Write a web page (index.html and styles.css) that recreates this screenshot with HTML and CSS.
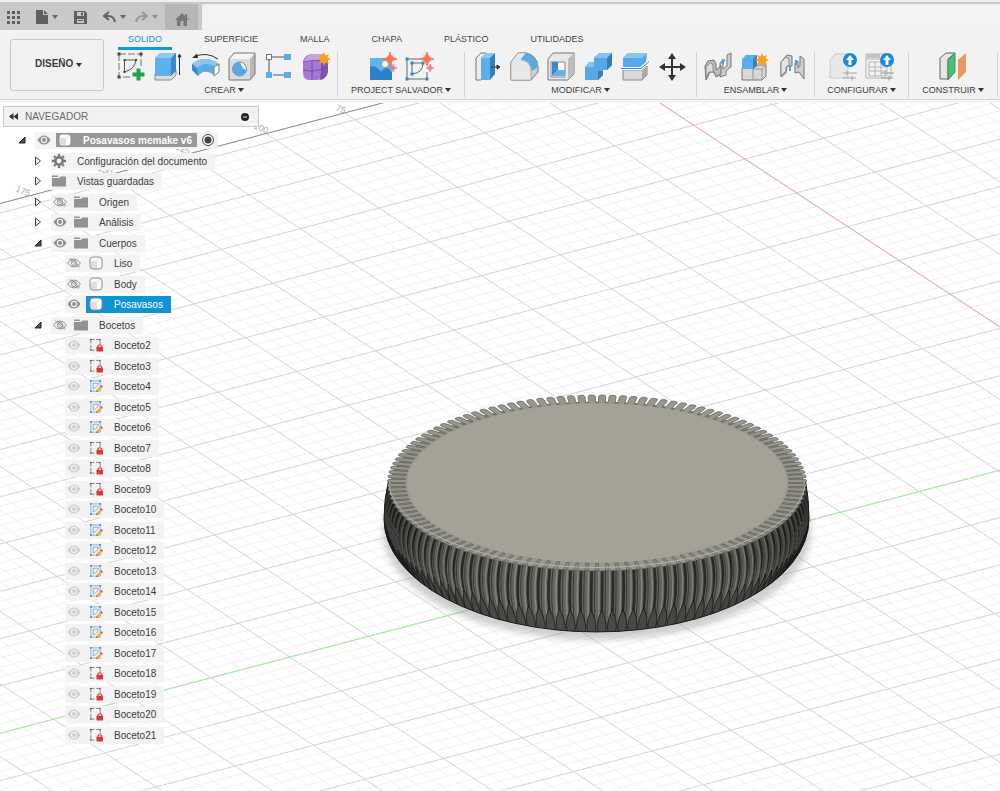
FILE: index.html
```html
<!DOCTYPE html>
<html lang="es">
<head>
  <meta charset="UTF-8">
  <meta name="viewport" content="width=device-width, initial-scale=1.0">
  <title>Posavasos memake v6</title>
  <link rel="stylesheet" href="styles.css">
</head>
<body>
  <!-- Shared icons for the browser tree -->
  <svg class="symbols" aria-hidden="true">
    <symbol id="eye" viewBox="0 0 14 10"><path d="M0.5 5Q3.5 0.5 7 0.5T13.5 5Q10.5 9.5 7 9.5T0.5 5Z" fill="currentColor"/><circle cx="7" cy="5" r="3.2" fill="#f2f2f2"/><circle cx="7" cy="5" r="2" fill="currentColor"/></symbol>
    <symbol id="eye-off" viewBox="0 0 14 10"><path d="M0.5 5Q3.5 1 7 1T13.5 5Q10.5 9 7 9T0.5 5Z" fill="none" stroke="currentColor"/><circle cx="7" cy="5" r="2.5" fill="none" stroke="currentColor"/><path d="M2 0.5L12 9.5M4 0.5L13 8.5" stroke="currentColor" stroke-width="0.8"/></symbol>
    <symbol id="folder" viewBox="0 0 14 12"><path d="M0 0.5H5.5L6.5 2H0Z M0 3H7L8.5 1.5H14V11.5H0Z" fill="#929292"/></symbol>
    <symbol id="body" viewBox="0 0 14 14"><rect x="1" y="1" width="12" height="12" rx="3" fill="#fafafa" stroke="#8d8d8d"/><path d="M3 5H8V12H4Q2 12 2 10V6Z" fill="#dedede"/><path d="M8 5L11 2" stroke="#ddd"/></symbol>
    <symbol id="sketch-lock" viewBox="0 0 15 15"><path d="M2 1.5H12V7M2 2V13H7" fill="none" stroke="#666" stroke-width="0.8" stroke-dasharray="4 1.5"/><path d="M1 1h1.500v1.500h-1.500zM11 1h1.500v1.500h-1.500zM1 12h1.500v1.500h-1.500z" fill="#444"/><rect x="8" y="9.5" width="7" height="5" rx="0.5" fill="#d9373c"/><path d="M9.5 10V8.5Q11.5 6 13.5 8.5V10" fill="none" stroke="#d9373c" stroke-width="1.2"/></symbol>
    <symbol id="sketch" viewBox="0 0 15 15"><path d="M2 2H12V13H2Z" fill="none" stroke="#8a9aa5" stroke-width="0.8"/><path d="M4.5 4.5H10Q9.5 9 4.5 10.5Z" fill="none" stroke="#4d9edb" stroke-width="0.8"/><path d="M1 1h2v2h-2zM11 1h2v2h-2zM1 12h2v2h-2z" fill="#3f96d8"/><path d="M8 13.5L8.5 11L12 7.5L14 9.5L10.5 13Z" fill="#f4b040"/><path d="M12 7.5L13 6.5L15 8.5L14 9.5Z" fill="#d9373c"/><path d="M7.5 14L8.5 12L9.5 13Z" fill="#444"/></symbol>
    <symbol id="gear" viewBox="0 0 12 12"><circle cx="6" cy="6" r="3.2" fill="none" stroke="#777" stroke-width="2.2"/><path d="M6 0V2M6 10V12M0 6H2M10 6H12M1.8 1.8L3 3M9 9L10.2 10.2M1.8 10.2L3 9M9 3L10.2 1.8" stroke="#777" stroke-width="2"/></symbol>
    <symbol id="closed" viewBox="0 0 8 10"><path d="M1.5 1V9L6.5 5Z" fill="#fff" stroke="#444"/></symbol>
    <symbol id="open" viewBox="0 0 8 10"><path d="M7 2V8H1Z" fill="#555" stroke="#222"/></symbol>
    <symbol id="spark" viewBox="0 0 14 14"><path d="M7 0Q7.8 6.2 14 7Q7.8 7.8 7 14Q6.2 7.8 0 7Q6.2 6.2 7 0Z"/></symbol>
    <symbol id="star" viewBox="0 0 14 14"><path d="M7 0L8.5 3.6L12 2L10.4 5.5L14 7L10.4 8.5L12 12L8.5 10.4L7 14L5.5 10.4L2 12L3.6 8.5L0 7L3.6 5.5L2 2L5.5 3.6Z" fill="#f7a11a"/></symbol>
  </svg>

  <header>
    <div class="quickbar">
      <button aria-label="Panel de datos"><svg width="13" height="13"><path d="M0 0h3v3h-3zM5 0h3v3h-3zM10 0h3v3h-3zM0 5h3v3h-3zM5 5h3v3h-3zM10 5h3v3h-3zM0 10h3v3h-3zM5 10h3v3h-3zM10 10h3v3h-3z" fill="#606060"/></svg></button>
      <button class="with-arrow" aria-label="Archivo"><svg width="12" height="14"><path d="M0 0H7V5H12V14H0Z M8 0L12 4H8Z" fill="#606060"/></svg><span class="arrow"></span></button>
      <button aria-label="Guardar"><svg width="13" height="13"><path d="M0 0H11L13 2V13H0Z" fill="#606060"/><path d="M3 1H10V5H3ZM3 8H10V12H3Z" fill="#c9c9c9"/><path d="M7 1.5h2v3h-2zM4 9h5v1h-5z" fill="#606060"/></svg></button>
      <button class="with-arrow" aria-label="Deshacer"><svg width="13" height="12"><path d="M6 1L1 5L6 9M1 5H5Q11 5 12 11" fill="none" stroke="#606060" stroke-width="2"/></svg><span class="arrow"></span></button>
      <button class="with-arrow faded" aria-label="Rehacer"><svg width="13" height="12"><path d="M7 1L12 5L7 9M12 5H8Q2 5 1 11" fill="none" stroke="#777" stroke-width="2"/></svg><span class="arrow"></span></button>
      <button class="home" aria-label="Inicio"><svg width="14" height="13"><path d="M7 0L14 7H12V13H8.5V8H5.5V13H2V7H0Z M10 1h2v4h-2z" fill="#777"/></svg></button>
      <div class="doc-tab"></div>
    </div>

    <div class="toolbar">
      <label class="workspace">
        <select aria-label="Espacio de trabajo"><option>DISEÑO</option></select>
        <span class="arrow"></span>
      </label>
      <div class="ribbon">
        <nav class="tabs">
          <a href="#" class="active">SOLIDO</a>
          <a href="#">SUPERFICIE</a>
          <a href="#">MALLA</a>
          <a href="#">CHAPA</a>
          <a href="#">PLÁSTICO</a>
          <a href="#">UTILIDADES</a>
        </nav>
        <div class="groups">
          <div class="group">
            <div class="tools">
              <button aria-label="Crear boceto"><svg viewBox="0 0 30 30"><path d="M2 2H24V14M2 2V25H15" fill="none" stroke="#777" stroke-dasharray="7 2"/><path d="M7.5 8H19Q18 17 7.5 20Z" fill="none" stroke="#555"/><path d="M0.5 0.5h3v3h-3zM22.5 0.5h3v3h-3zM0.5 23.5h3v3h-3zM6.5 7h2v2h-2zM18 7h2v2h-2zM6.5 19h2v2h-2z" fill="#444"/><path d="M19.5 16.5h4v4h4v4h-4v4h-4v-4h-4v-4h4z" fill="#1fa548"/></svg></button>
              <button aria-label="Extrusión"><svg viewBox="0 0 30 30"><path d="M1 22L6 18H22V23L17 28H1Z" fill="#ddd" stroke="#888"/><path d="M1 6L6 1H22L17 6V24H1Z" fill="#5fb0ea"/><path d="M1 6L6 1H22L17 6Z" fill="#8bc8f2"/><path d="M17 6L22 1V19L17 24Z" fill="#3d87c4"/><path d="M25.5 23V3M24 5L25.5 2L27 5Z" fill="#333" stroke="#333"/></svg></button>
              <button aria-label="Revolución"><svg viewBox="0 0 30 30"><path d="M3 5Q15 -1 27 7" fill="none" stroke="#333"/><path d="M1 6L6 1.5L7 6Z" fill="#333"/><path d="M1 12Q14 2 28 12L23 23Q14 16 7 24L1 18Z" fill="#5cace4"/><path d="M1 12Q14 2 28 12L24 15Q14 8 6 16Z" fill="#8ac8f1"/><path d="M1 12L6 16L7 24L1 18Z" fill="#408ac4"/><path d="M23 15L28 12V20L23 24Z" fill="#fff" stroke="#777"/></svg></button>
              <button aria-label="Agujero"><svg viewBox="0 0 30 30"><path d="M1 7L6 1H27V22L22 28H1Z" fill="#dcdcdc"/><path d="M1 7L6 1H27L22 7Z" fill="#f5f5f5"/><path d="M22 7L27 1V22L22 28Z" fill="#b9b9b9"/><path d="M1 7L6 1H27V22L22 28H1Z" fill="none" stroke="#777"/><circle cx="11.5" cy="17" r="7" fill="#fff" stroke="#888"/><path d="M12 10Q14 17 19 18Q17 24 11.5 24A7 7 0 0 1 12 10Z" fill="#55a9e4"/></svg></button>
              <button aria-label="Patrón"><svg viewBox="0 0 30 30"><path d="M6 5H21M4 8V20M8 23H21" stroke="#555"/><rect x="1.5" y="2.5" width="5" height="5" fill="#fff" stroke="#777"/><path d="M19 2h7v6h-7zM1 20h6v6h-6zM19 20h7v6h-7z" fill="#5badea"/></svg></button>
              <button aria-label="Crear forma"><svg viewBox="0 0 30 30"><path d="M1 9Q3 2 11 2H20Q26 5 26 12V20Q24 28 15 28H7Q1 28 1 20Z" fill="#a679d4"/><path d="M2 10Q4 3 11 2H20Q24 4 20 8Z" fill="#c4a2e8"/><path d="M20 8Q26 5 26 12V20Q24 27 18 28Z" fill="#8254b2"/><path d="M10 9V28M1 18Q12 21 26 15M2 10Q12 7 20 9V27" fill="none" stroke="#6e3fa5" stroke-width="0.8"/><use href="#star" x="15" y="0" width="14" height="14"/></svg></button>
            </div>
            <button class="menu">CREAR<span class="arrow"></span></button>
          </div>
          <div class="group">
            <div class="tools">
              <button aria-label="Generar imagen"><svg viewBox="0 0 30 30"><path d="M2 6H24V28H2Z" fill="#62b2eb"/><path d="M2 15Q8 12 13 20Q19 12 24 21V28H2Z" fill="#2a81c5"/><circle cx="17" cy="12" r="3" fill="#fff4bd"/><use href="#spark" x="15" y="0" width="14" height="14" fill="#ff7651" stroke="#ff7651"/><use href="#spark" x="21" y="12" width="8" height="8" fill="#f27591" stroke="#f27591"/></svg></button>
              <button aria-label="Generar boceto"><svg viewBox="0 0 30 30"><path d="M2 7H16M2 7V27H22V20M7 11H18Q18 21 7 22Z" fill="none" stroke="#666"/><path d="M0.5 5.5h3v3h-3zM0.5 25.5h3v3h-3zM20.5 25.5h3v3h-3zM5.5 9.5h3v3h-3zM16.5 9.5h3v3h-3zM5.5 20.5h3v3h-3z" fill="#258bd1"/><use href="#spark" x="15" y="0" width="14" height="14" fill="#ff7651" stroke="#ff7651"/><use href="#spark" x="21" y="12" width="8" height="8" fill="#f27591" stroke="#f27591"/></svg></button>
            </div>
            <button class="menu">PROJECT SALVADOR<span class="arrow"></span></button>
          </div>
          <div class="group">
            <div class="tools">
              <button aria-label="Pulsar/tirar"><svg viewBox="0 0 30 30"><path d="M3 6L8 1H13V23L8 28H3Z" fill="#eee" stroke="#777"/><path d="M8 6L13 1H22L17 6V28H8Z" fill="#5cade8"/><path d="M8 6L13 1H22L17 6Z" fill="#8bc8f2"/><path d="M17 6L22 1V22L17 28Z" fill="#347fbc"/><path d="M18 15H25M24 13L27 15L24 17Z" fill="#333" stroke="#333"/></svg></button>
              <button aria-label="Empalme"><svg viewBox="0 0 30 30"><path d="M1 10L8 1H16Q27 3 28 15V20L21 28H1Z" fill="#cfcfcf" stroke="#777"/><path d="M1 10L8 1H16L11 8Q21 9 21 20V28H1Z" fill="#e8e8e8" stroke="#888" stroke-width="0.5"/><path d="M11 7L16 1Q27 3 28 15L22 19Q20 8 11 7Z" fill="#58aae5"/></svg></button>
              <button aria-label="Vaciado"><svg viewBox="0 0 30 30"><path d="M1 7L6 1H27V22L21 28H1Z" fill="#e8e8e8" stroke="#777"/><path d="M21 7L27 1V22L21 28Z" fill="#bdbdbd"/><path d="M4 10H18V25H4Z" fill="#f9f9f9" stroke="#888"/><path d="M5 10H11V18L5 24Z" fill="#3889ca"/><path d="M5 24L11 18H18V24Z" fill="#64b2e9"/></svg></button>
              <button aria-label="Combinar"><svg viewBox="0 0 30 30"><path d="M1 15L5 10H10V6L15 1H28V13L23 18H19V23L14 28H1Z" fill="#56a8e4"/><path d="M1 15L5 10H10L10 15ZM10 6L15 1H28L23 6Z" fill="#84c4f0"/><path d="M23 6L28 1V13L23 18ZM14 19H19V23L14 28Z" fill="#347fb9"/></svg></button>
              <button aria-label="Dividir cuerpo"><svg viewBox="0 0 30 30"><path d="M2 6L7 1H26L25 11L21 15H2Z" fill="#55a9e5"/><path d="M2 6L7 1H26L21 6Z" fill="#87c7f1"/><path d="M2 18H21L26 14V23L21 28H2Z" fill="#d8d8d8" stroke="#888"/><path d="M21 19L26 14V23L21 28Z" fill="#aaa"/><path d="M0 16.5H20L28 9.5" fill="none" stroke="#fff" stroke-width="3"/><path d="M0 16.5H20L28 9.5" fill="none" stroke="#238ad3"/></svg></button>
              <button aria-label="Mover"><svg viewBox="0 0 30 30"><path d="M14 4V26M4 15H25" stroke="#333" stroke-width="2"/><path d="M14 1L18 7H10ZM14 29L10 23H18ZM1 15L7 11V19ZM28 15L22 19V11Z" fill="#333"/></svg></button>
            </div>
            <button class="menu">MODIFICAR<span class="arrow"></span></button>
          </div>
          <div class="group">
            <div class="tools">
              <button aria-label="Junta"><svg viewBox="0 0 30 30"><path d="M16 11L19 10V17L23 14V3L27 1V15L22 19V23L16 25Z" fill="#ccc" stroke="#777"/><path d="M1 14L4 9L10 8L12 12V18L17 14V22L12 25L10 20H6L2 28Z" fill="#bbb" stroke="#707070"/><path d="M4 13Q7 9 9 13V20H5L2 26V15Z" fill="#ddd" stroke="#888"/><path d="M19 7V12M17 10L21 8" stroke="#4da3df" stroke-width="2"/></svg></button>
              <button aria-label="Nuevo componente"><svg viewBox="0 0 30 30"><path d="M1 16H13L17 13H25L25 24L21 28H1Z" fill="#d7d7d7" stroke="#777"/><path d="M12 17V28M12 17H21L25 13M21 17V28" fill="none" stroke="#999"/><path d="M1 7L5 3H16V13L12 17H1Z" fill="#5badea"/><path d="M12 7L16 3V13L12 17Z" fill="#3581bb"/><use href="#star" x="14" y="1" width="14" height="14"/></svg></button>
              <button aria-label="Unión como construida"><svg viewBox="0 0 30 30"><path d="M3 10L9 3L14 4V14H9L8 21L3 25Z" fill="#ccc" stroke="#777"/><path d="M3 10L8 5L11 7V13L8 15V19L3 24Z" fill="#e5e5e5" stroke="#888"/><path d="M17 11L20 9V16L22 13V4L26 7V27L21 20L17 21Z" fill="#cfcfcf" stroke="#777"/><path d="M12 14V19M18 8V13" stroke="#459fdf" stroke-width="2"/></svg></button>
            </div>
            <button class="menu">ENSAMBLAR<span class="arrow"></span></button>
          </div>
          <div class="group">
            <div class="tools">
              <button aria-label="Configurar modelo"><svg viewBox="0 0 30 30"><path d="M2 8L7 2H20V26H2Z" fill="#e8e8e8" stroke="#ccc"/><path d="M15 21H29M19 18.5V23.5M15 26H28M24 23.5V28.5" stroke="#a4a4a4"/><circle cx="22" cy="8" r="7" fill="#168adb"/><path d="M22 3L26 8H23.5V13H20.5V8H18Z" fill="#fff"/></svg></button>
              <button aria-label="Tabla de configuraciones"><svg viewBox="0 0 30 30"><path d="M1 2H26V26H1ZM1 7H26M4 10H22V24H4ZM4 15H22M4 19H22M10 10V24M16 10V24" fill="#f4f4f4" stroke="#b4b4b4"/><path d="M1 2H15V6H1Z" fill="#c4c4c4"/><path d="M16 21H29M20 18.5V23.5M16 26H28M24 23.5V28.5" stroke="#999"/><circle cx="22" cy="8" r="7" fill="#168adb"/><path d="M22 3L26 8H23.5V13H20.5V8H18Z" fill="#fff"/></svg></button>
            </div>
            <button class="menu">CONFIGURAR<span class="arrow"></span></button>
          </div>
          <div class="group">
            <div class="tools">
              <button aria-label="Plano de desfase"><svg viewBox="0 0 30 30"><path d="M2 6L8 1H17L10 7V27H2Z" fill="#e6e6e6" stroke="#666"/><path d="M10 8L17 1V20L10 28Z" fill="#45c373" stroke="#4f8a65"/><path d="M20 8L28 1V20L20 28Z" fill="#e9975e"/></svg></button>
            </div>
            <button class="menu">CONSTRUIR<span class="arrow"></span></button>
          </div>
        </div>
      </div>
    </div>
  </header>

  <main>
    <svg id="scene" viewBox="0 102 1000 689" preserveAspectRatio="xMinYMin slice" role="img" aria-label="Modelo 3D del posavasos"></svg>

    <aside>
      <div class="browser-head">
        <button aria-label="Contraer"><svg width="9" height="7"><path d="M4.5 0V7L0 3.5ZM9 0V7L4.5 3.5Z" fill="#333"/></svg></button>
        <h2>NAVEGADOR</h2>
        <button aria-label="Minimizar"><svg width="8" height="8"><circle cx="4" cy="4" r="4" fill="#222"/><path d="M2 4H6" stroke="#ddd"/></svg></button>
      </div>
      <ul id="tree"></ul>
    </aside>
  </main>

  <script src="script.js"></script>
</body>
</html>
```

FILE: styles.css
```css
* {
  box-sizing: border-box;
}
body {
  margin: 0;
  min-height: 100vh;
  display: flex;
  flex-direction: column;
  font-family: "Liberation Sans", Arial, sans-serif;
  font-size: 9px;
  color: #3c3c3c;
  background-color: #fff;
}
button, select {
  font: inherit;
  color: inherit;
  background: none;
  border: none;
  padding: 0;
  margin: 0;
}
svg {
  display: block;
}
.symbols {
  position: absolute;
  width: 0;
  height: 0;
}
.arrow {
  display: inline-block;
  border: 3px solid transparent;
  border-top: 4px solid #333;
  border-bottom: none;
}
header {
  background-color: #f2f2f2;
  border-bottom: 3px solid #f4f4f4;
}

/* Top bar with file actions */
.quickbar {
  display: flex;
  align-items: center;
  height: 30px;
  padding: 2px 0 0 7px;
  gap: 16px;
  background-color: #c9c9c9;
  border-top: 2px solid #eee;
}
.quickbar .with-arrow {
  display: flex;
  align-items: center;
  gap: 4px;
}
.quickbar .with-arrow + .with-arrow {
  margin-left: -7px;
}
.quickbar .arrow {
  border-top-color: #666;
}
.faded {
  opacity: 0.6;
}
.home {
  align-self: stretch;
  display: flex;
  align-items: center;
  justify-content: center;
  width: 33px;
  margin-left: -9px;
  padding-top: 4px;
  background-color: #b6b6b6;
}
.doc-tab {
  flex: 1;
  align-self: stretch;
  margin-left: -12px;
  background-color: #f3f3f3;
  border-radius: 3px 0 0 0;
}

/* Ribbon */
.toolbar {
  display: flex;
  height: 70px;
  border-bottom: 1px solid #d4d4d4;
}
.workspace {
  position: relative;
  width: 94px;
  height: 52px;
  margin: 9px 7px 0 10px;
}
.workspace select {
  appearance: none;
  width: 100%;
  height: 100%;
  padding: 0 0 3px 24px;
  font-size: 10px;
  font-weight: bold;
  border: 1px solid #c8c8c8;
  border-radius: 3px;
}
.workspace .arrow {
  position: absolute;
  right: 22px;
  top: 24px;
}
.ribbon {
  flex: 1;
}
.tabs {
  display: flex;
  gap: 22px;
  height: 20px;
  padding-left: 7px;
}
.tabs a {
  padding: 4px 10px 0;
  line-height: 11px;
  color: #444;
  text-decoration: none;
  border-bottom: 3px solid transparent;
}
.tabs .active {
  color: #1795d4;
  border-bottom-color: #1795d4;
}
.groups {
  display: grid;
  grid-template-columns: 227px 127px 232px 118px 94px 89px;
  padding-top: 2px;
}
.group {
  display: flex;
  flex-direction: column;
  align-items: center;
  height: 45px;
  border-right: 1px solid #d2d2d2;
}
.tools {
  display: flex;
  gap: 7px;
}
.tools svg {
  width: 30px;
  height: 30px;
}
.menu {
  display: flex;
  align-items: center;
  gap: 2px;
  height: 17px;
}

/* Viewport */
main {
  position: relative;
  flex: 1;
}
#scene {
  position: absolute;
  width: 100%;
  height: 100%;
}
aside {
  position: relative;
  width: 256px;
  margin: 3px 0 0 3px;
}
.browser-head {
  display: flex;
  align-items: center;
  gap: 7px;
  height: 21px;
  padding: 0 9px 0 5px;
  background-color: #f1f1f1;
  border: 1px solid #cbcbcb;
}
.browser-head h2 {
  flex: 1;
  margin: 0;
  font-size: 10px;
  font-weight: normal;
  color: #6a6a6a;
}
#tree {
  list-style: none;
  margin: 3px 0 0;
  padding: 0;
  font-size: 10px;
}
#tree li {
  display: flex;
  align-items: center;
  height: 20px;
}
#tree li:nth-child(odd) {
  margin-bottom: 1px;
}
.toggle {
  width: 8px;
  margin: 0 9px 0 15px;
}
.toggle svg {
  width: 8px;
  height: 10px;
}
.level-1 .toggle {
  margin-left: 31px;
}
.level-2 .toggle {
  margin: 0 0 0 54px;
}
.chip {
  display: flex;
  align-items: center;
  gap: 7px;
  height: 17px;
  padding-right: 8px;
  background-color: rgba(242, 242, 242, 0.95);
}
.chip .icon {
  width: 14px;
  height: 14px;
}
.chip .name {
  display: flex;
  align-items: center;
  height: 17px;
  gap: 11px;
}
.eye {
  padding-left: 2px;
  color: #8e8e8e;
}
.eye svg {
  width: 14px;
  height: 10px;
}
.eye.dim {
  color: #cfcfcf;
}
.no-eye .name {
  padding-left: 1px;
}
.level-0 .chip {
  gap: 5px;
  padding-right: 4px;
}
.level-0 .name {
  height: 14px;
  padding: 0 5px 0 2px;
  color: #fff;
  font-weight: bold;
  background-color: #989898;
}
.level-0 input {
  width: 12px;
  height: 12px;
  margin: 0;
  accent-color: #444;
}
.level-2 .chip {
  gap: 5px;
}
.level-2 .name {
  padding-left: 3px;
}
.selected .chip {
  padding-right: 0;
}
.selected .name {
  padding-right: 8px;
  color: #fff;
  background-color: #0e94d6;
}

/* Scene drawing */
.minor {
  stroke: #f2f2f2;
}
.major {
  stroke: #d4d4d4;
}
.edge {
  stroke: #888;
}
.axis-x {
  stroke: #f5a3a3;
}
.axis-y {
  stroke: #98f298;
}
.ruler {
  fill: #aaa;
  font-size: 9px;
}
```

FILE: script.js
```js
// Browser tree: level, icon, text, eye state, toggle
const rows = [
  [0, 'body', 'Posavasos memake v6', 'eye', 'open'],
  [1, 'gear', 'Configuración del documento', '', 'closed'],
  [1, 'folder', 'Vistas guardadas', '', 'closed'],
  [1, 'folder', 'Origen', 'eye-off', 'closed'],
  [1, 'folder', 'Análisis', 'eye', 'closed'],
  [1, 'folder', 'Cuerpos', 'eye', 'open'],
  [2, 'body', 'Liso', 'eye-off', ''],
  [2, 'body', 'Body', 'eye-off', ''],
  [2, 'body', 'Posavasos', 'eye', ''],
  [1, 'folder', 'Bocetos', 'eye-off', 'open']
];
const locked = [2, 3, 7, 8, 9, 18, 19, 20, 21];
for (let i = 2; i <= 21; i++) {
  rows.push([2, locked.includes(i) ? 'sketch-lock' : 'sketch', 'Boceto' + i, 'dim', '']);
}

document.getElementById('tree').innerHTML = rows.map(([level, icon, text, eye, toggle]) => {
  const classes = ['level-' + level];
  if (!eye) classes.push('no-eye');
  if (text === 'Posavasos') classes.push('selected');
  const toggleHtml = toggle
    ? `<button class="toggle" aria-label="Desplegar ${text}"><svg><use href="#${toggle}"/></svg></button>`
    : '<span class="toggle"></span>';
  const eyeHtml = eye
    ? `<button class="eye ${eye}" aria-label="Visibilidad de ${text}"><svg><use href="#${eye === 'dim' ? 'eye' : eye}"/></svg></button>`
    : '';
  const radio = level === 0 ? '<input type="radio" aria-label="Activar componente" checked>' : '';
  return `<li class="${classes.join(' ')}">${toggleHtml}
    <div class="chip">${eyeHtml}<span class="name"><svg class="icon"><use href="#${icon}"/></svg>${text}</span>${radio}</div></li>`;
}).join('');

// Ground grid, u and v are the size of one big square
const O = [745, 158], u = [51.3, 33.8], v = [78.7, -20.7];
const grid = (a, b) => (O[0] + a * u[0] + b * v[0]).toFixed(1) + ' ' + (O[1] + a * u[1] + b * v[1]).toFixed(1);
const line = (p, q, cls) => `<path class="${cls}" d="M${p}L${q}"/>`;
let minor = '', major = '';
for (let i = -16; i <= 80; i++) {
  const l = line(grid(i / 5, -18), grid(i / 5, 6), i % 5 ? 'minor' : 'major');
  if (i % 5) minor += l; else major += l;
}
for (let i = -90; i <= 30; i++) {
  const l = line(grid(-3.2, i / 5), grid(16, i / 5), i % 5 ? 'minor' : 'major');
  if (i % 5) minor += l; else major += l;
}
let svg = minor + major
  + line(grid(-3.2, -18), grid(-3.2, 6), 'edge')
  + line(grid(-3.2, 0), grid(16, 0), 'axis-x')
  + line(grid(8, -18), grid(8, 6), 'axis-y');
[[15, 190, 175], [97, 169, 150], [175, 148, 125], [253, 127, 100], [335, 109, 75]].forEach(([x, y, n]) => {
  svg += `<text class="ruler" transform="translate(${x} ${y}) rotate(22)">${n}</text>`;
});

// Coaster
const TEETH = 124, step = 2 * Math.PI / TEETH;
const at = (cx, cy, rx, ry, t) => (cx + rx * Math.cos(t)).toFixed(1) + ' ' + (cy + ry * Math.sin(t)).toFixed(1);
const rim = (r, t) => at(597, 482, 208.5 * r, 87.5 * r, t);
const rib = t => `M${rim(1, t)}Q${at(596.5, 506, 222, 94, t)} ${at(596.5, 539, 198, 92.5, t)}`;
const outline = 'M388.5 480Q384 498 384 518A212.5 113 0 0 0 809 518Q809 498 805.5 480';

svg += `<defs>
  <clipPath id="side"><path d="${outline}A208.5 87.5 0 0 1 388.5 480Z"/></clipPath>
  <linearGradient id="shade"><stop offset="0" stop-opacity="0.5"/><stop offset="0.12" stop-opacity="0.12"/><stop offset="0.4" stop-opacity="0"/><stop offset="0.85" stop-opacity="0.12"/><stop offset="1" stop-opacity="0.5"/></linearGradient>
  <filter id="soft"><feGaussianBlur stdDeviation="3"/></filter>
</defs>
<ellipse cx="597" cy="531" rx="214" ry="108" fill="#888" opacity="0.4" filter="url(#soft)"/>
<g clip-path="url(#side)" fill="none"><rect x="380" y="470" width="432" height="165" fill="#2b2b29"/>`;
for (let i = -1; i <= TEETH / 2 + 1; i++) {
  const t = i * step, s = Math.max(0.25, Math.abs(Math.sin(t)));
  svg += `<path d="${rib(t)}" stroke="#666660" stroke-width="${(8 * s).toFixed(1)}"/>`
    + `<path d="${rib(t - step * 0.2)}" stroke="#8a8a83" stroke-width="${(1.5 * s).toFixed(1)}"/>`
    + `<path d="${rib(t + step * 0.2)}" stroke="#383835" stroke-width="${s.toFixed(1)}"/>`;
}
// Pointed cuts at the base of every groove
for (let i = 6; i < TEETH / 2 - 6; i++) {
  const t = (i + 0.5) * step;
  const tip = at(596.5, 520, 210, 89, t), base = at(596.5, 545, 194, 94, t);
  svg += `<path d="M${tip}Q${at(596.5, 536, 204, 92, t - step * 0.9)} ${base}Q${at(596.5, 536, 204, 92, t + step * 0.9)} ${tip}Z" fill="#4c4c48" stroke="#1c1c1b" stroke-width="0.8"/>`;
}
svg += `<rect x="380" y="470" width="432" height="165" fill="url(#shade)"/></g>
<path d="${outline}" fill="none" stroke="#1c1c1b"/>
<ellipse cx="597" cy="485" rx="207" ry="84.5" fill="#8b8a82"/>`;

let face = '';
for (let i = 0; i < TEETH; i++) {
  const t = (i + 0.5) * step;
  face += `${i ? 'L' : 'M'}${rim(0.92, t - step * 0.35)}L${rim(0.985, t - step * 0.35)}`
    + `Q${rim(1.005, t - step * 0.34)} ${rim(1.005, t - step * 0.1)}L${rim(1.005, t + step * 0.1)}Q${rim(1.005, t + step * 0.34)} ${rim(0.985, t + step * 0.35)}`
    + `L${rim(0.92, t + step * 0.35)}`;
}
svg += `<path d="${face}Z" fill="#98978d" stroke="#5c5c56" stroke-width="0.7"/>
<ellipse cx="597" cy="482" rx="190" ry="79.5" fill="#a4a297"/>
<path d="M389 485A208.5 87.5 0 0 0 805 485" fill="none" stroke="#b4b4ad"/>`;
document.getElementById('scene').innerHTML = svg;
```
